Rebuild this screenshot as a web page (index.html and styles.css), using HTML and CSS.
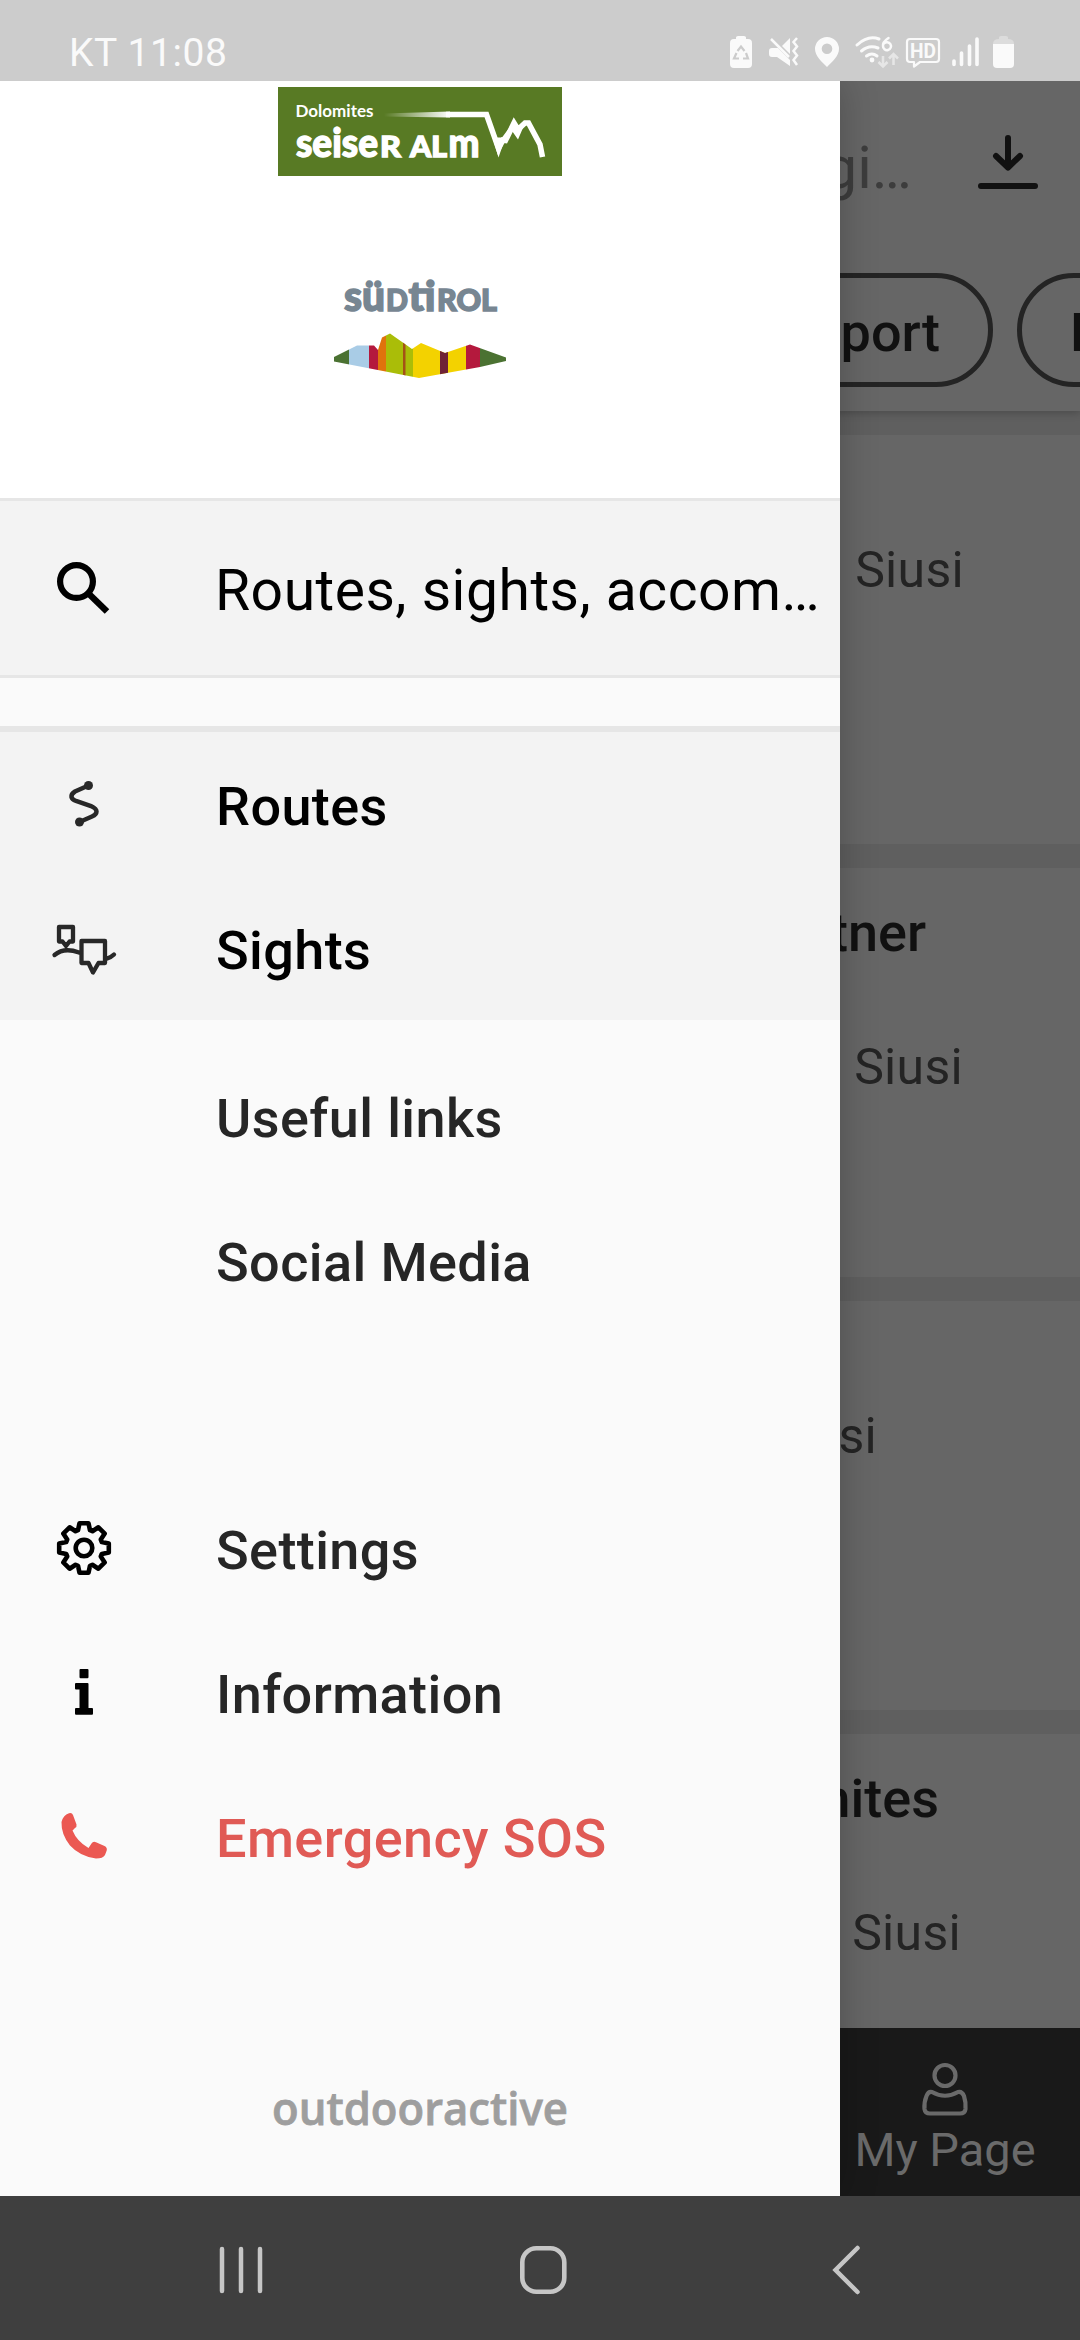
FILE: index.html
```html
<!DOCTYPE html>
<html lang="en">
<head>
<meta charset="utf-8">
<title>Seiser Alm</title>
<link rel="stylesheet" href="styles.css">
</head>
<body>
<div class="phone">
  <header class="status">
    <span class="status-time">KT 11:08</span>
    <svg class="status-icons" width="290" height="40" viewBox="728 32 290 40">
      <path fill="#fafafa" d="M736 39V37.500Q736 36 738 36H744Q746 36 746 37.500V39H748Q752 39 752 43V64Q752 68 748 68H734Q730 68 730 64V43Q730 39 734 39Z"/>
      <path fill="none" stroke="#ccc" stroke-width="2.200" d="M737.500 51L741 46.500L744.500 51M746 53L748 58.500H743M739 58.500H734L736.500 53"/>
      <path fill="#fafafa" d="M769 51Q769 48 772 48H778L790 60V66L777 57H772Q769 57 769 54ZM790 38V54L782 46Z"/>
      <path fill="none" stroke="#fafafa" stroke-width="2.500" d="M771 39L789 57M797 38L793.500 42L797 46.500L793.500 51L797 55.500L793.500 60L797 65"/>
      <path fill="#fafafa" fill-rule="evenodd" d="M827 37A12 12 0 0 1 839 49C839 56 832 62 827 67C822 62 815 56 815 49A12 12 0 0 1 827 37ZM827 43.500A5.300 5.300 0 1 0 827 54.100A5.300 5.300 0 1 0 827 43.500Z"/>
      <g fill="none" stroke="#fafafa" stroke-width="3" stroke-linecap="round">
        <path d="M857 45Q868 35 879 39M861.500 51Q869 44.500 878 48M866.500 56Q872 52 877 56"/>
        <path stroke-width="2.500" d="M888.500 38Q882.500 42 883 46A4 4 0 1 0 884 43.500"/>
      </g>
      <circle cx="872" cy="60" r="2.400" fill="#fafafa"/>
      <path fill="none" stroke="#e6e6e6" stroke-width="2.500" d="M883 56V66M878.500 62L883 66.500L887.500 62M893.500 65V55M889 58.500L893.500 54L898 58.500"/>
      <path fill="none" stroke="#fafafa" stroke-width="2.200" stroke-linejoin="round" d="M910 39H936Q939 39 939 42V59Q939 62 936 62H920L914 66.500V62H910Q907 62 907 59V42Q907 39 910 39Z"/>
      <text class="hd" x="910" y="58" textLength="26" lengthAdjust="spacingAndGlyphs">HD</text>
      <path fill="none" stroke="#fafafa" stroke-width="3.600" stroke-linecap="round" d="M954 61V64.500M961.500 53V64.500M969.500 46V64.500M977 39V64.500"/>
      <path fill="#dcdcdc" d="M999 39V37.500Q999 36 1001 36H1006Q1008 36 1008 37.500V39Q1014 39 1014 44H993Q993 39 999 39Z"/>
      <path fill="#fafafa" d="M993 44H1014V64Q1014 68 1010 68H997Q993 68 993 64Z"/>
    </svg>
  </header>

  <div class="stage">
    <main class="page">
      <div class="topbar">
        <div class="search-row">
          <span class="query">gi…</span>
          <svg width="64" height="60" viewBox="976 132 64 60" fill="none" stroke="#111" stroke-width="6" stroke-linecap="round" stroke-linejoin="round"><path d="M1008 138V167M996 156L1008 167.500L1020 156M981 186H1035"/></svg>
        </div>
        <div class="chips">
          <span class="chip chip-first">port</span>
          <span class="chip chip-next">H</span>
        </div>
      </div>
      <div class="cards">
        <article class="card"><p class="place upper p1">Siusi</p></article>
        <article class="card"><h2 class="title t2">tner</h2><p class="place p2">Siusi</p></article>
        <article class="card"><p class="place upper p3">si</p></article>
        <article class="card last"><h2 class="title t4">mites</h2><p class="place p4">Siusi</p></article>
      </div>
      <nav class="tabbar">
        <div class="tab">
          <svg width="50" height="56" viewBox="920 2060 50 56" fill="none" stroke="#6a6a6a" stroke-width="4.200" stroke-linejoin="round"><circle cx="945" cy="2074.500" r="10.500"/><path d="M932 2091Q945 2098.500 958 2091Q962 2090 964 2095Q966 2101 965.500 2108Q965 2112.500 960 2112.500H930Q925 2112.500 924.500 2108Q924 2101 926.500 2095Q928.500 2090 932 2091Z"/></svg>
          <span class="tab-label">My Page</span>
        </div>
      </nav>
    </main>

    <aside class="drawer">
      <div class="brand">
        <svg width="284" height="89" viewBox="278 87.500 284 89">
          <defs><linearGradient id="fade" x1="0" x2="1"><stop offset="0" stop-color="#fff" stop-opacity="0"/><stop offset="1" stop-color="#fff"/></linearGradient></defs>
          <rect x="278" y="87.500" width="284" height="89" fill="#587a24"/>
          <text class="logo-small" x="295.500" y="117" textLength="78" lengthAdjust="spacingAndGlyphs">Dolomites</text>
          <path fill="url(#fade)" d="M384 114L450 112V118L384 117Z"/>
          <path fill="none" stroke="#fff" stroke-width="5.500" d="M446 115H486.500L498.500 149L503 140.500L505.500 141L514 123.500L518 130L525 123.500H528.500L540 145L542.500 157.500"/>
          <path fill="#fff" d="M491 133L498.500 158L504 142H507L511 130L518 140L524 126H511L502 138L497 138Z"/>
          <text class="logo-big" x="296" y="157" textLength="82" lengthAdjust="spacingAndGlyphs">seise</text>
          <text class="logo-big sc" x="380" y="157" textLength="21" lengthAdjust="spacingAndGlyphs">R</text>
          <text class="logo-big sc" x="410" y="157" textLength="37" lengthAdjust="spacingAndGlyphs">AL</text>
          <text class="logo-big" x="448.500" y="157" textLength="31" lengthAdjust="spacingAndGlyphs">m</text>
        </svg>
        <svg class="tirol" width="176" height="106" viewBox="332 275 176 106">
          <text class="logo-tirol" x="344" y="311.500" textLength="41" lengthAdjust="spacingAndGlyphs">sü</text>
          <text class="logo-tirol sc2" x="386" y="311.500" textLength="22" lengthAdjust="spacingAndGlyphs">D</text>
          <text class="logo-tirol" x="408.500" y="311.500" textLength="27" lengthAdjust="spacingAndGlyphs">ti</text>
          <text class="logo-tirol sc2" x="437" y="311.500" textLength="60" lengthAdjust="spacingAndGlyphs">ROL</text>
          <clipPath id="ridge"><path d="M334 358L350 350L357 346.500H374L378 351L382 338.500L390 334.500L412 350L421 344L445 354L470 345.500L506 358.500V362L480 368L419 379L334 362.500Z"/></clipPath>
          <g clip-path="url(#ridge)">
            <path fill="#4b7232" d="M332 330H349V381H332ZM480 330H508V381H480Z"/>
            <path fill="#a9cce6" d="M349 330H369V381H349Z"/>
            <path fill="#b4193d" d="M369 330H378V381H369ZM466 330H480V381H466Z"/>
            <path fill="#e0730c" d="M378 330H386V381H378Z"/>
            <path fill="#aabd08" d="M386 330H413V381H386Z"/>
            <path fill="#a45216" d="M403 330H405.500V381H403Z"/>
            <path fill="#f3d200" d="M413 330H466V381H413Z"/>
            <path fill="#6f2336" d="M440 330H448V381H440Z"/>
          </g>
        </svg>
      </div>

      <div class="search">
        <span class="icon"><svg width="60" height="60" viewBox="54 557 60 60" fill="none" stroke="#000"><circle cx="76.500" cy="580.500" r="16.400" stroke-width="6.200"/><path stroke-width="6.500" d="M88.500 592.500L107 610.500"/></svg></span>
        <span class="search-text">Routes, sights, accom…</span>
      </div>

      <nav class="group featured">
        <a class="item"><span class="icon"><svg width="60" height="60" viewBox="54 774 60 60" fill="none" stroke="#282828" stroke-width="4.500"><path d="M88.500 785.500L75 791.500Q71 794 71.500 797Q72 799.500 76 801L91 806Q96.500 808.500 96.500 811.500Q96.500 814.500 92 816.500L79.500 822"/><circle cx="88.500" cy="785.500" r="4.500" fill="#282828" stroke="none"/><circle cx="79.500" cy="822" r="4.500" fill="#282828" stroke="none"/></svg></span><span>Routes</span></a>
        <a class="item"><span class="icon"><svg width="68" height="60" viewBox="50 918 68 60" fill="none" stroke="#282828" stroke-width="4.300" stroke-linejoin="round" stroke-linecap="round"><path d="M59 927H73V941.500H69.500L66 946L62.500 941.500H59ZM54.500 955Q64 947 79 952.500M81.500 941H105V963H98.500L93 972.500L88.500 963H81.500ZM106 959Q111 957.500 114 954.500"/><path d="M62 942H70L66 947Z" fill="#282828" stroke="none"/></svg></span><span>Sights</span></a>
      </nav>

      <nav class="group">
        <a class="item"><span class="icon"></span><span>Useful links</span></a>
        <a class="item"><span class="icon"></span><span>Social Media</span></a>
      </nav>

      <nav class="group tools">
        <a class="item"><span class="icon"><svg width="56" height="56" viewBox="-28 -28 56 56" fill="none" stroke="#000" stroke-width="4.600" stroke-linejoin="round"><path d="M-4.500 -24.800H4.500L6 -17.800L8.400 -16.800L14.400 -20.700L20.700 -14.400L16.800 -8.400L17.800 -6L24.800 -4.500V4.500L17.800 6L16.800 8.400L20.700 14.400L14.400 20.700L8.400 16.800L6 17.800L4.500 24.800H-4.500L-6 17.800L-8.400 16.800L-14.400 20.700L-20.700 14.400L-16.800 8.400L-17.800 6L-24.800 4.500V-4.500L-17.800 -6L-16.800 -8.400L-20.700 -14.400L-14.400 -20.700L-8.400 -16.800L-6 -17.800Z"/><circle r="8.300"/></svg></span><span>Settings</span></a>
        <a class="item"><span class="icon"><svg width="20" height="48" viewBox="74 1668 20 48"><path d="M80.500 1669H87.500Q88.500 1669 88.500 1670V1677Q88.500 1678.300 87.500 1678.300H80.500Q79.500 1678.300 79.500 1677V1670Q79.500 1669 80.500 1669ZM76 1683H87.500Q88.500 1683 88.500 1684V1708H92Q93 1708 93 1709V1713.500Q93 1714.700 92 1714.700H76Q75 1714.700 75 1713.500V1709Q75 1708 76 1708H79.500V1689.500H76Q75 1689.500 75 1688.500V1684Q75 1683 76 1683Z"/></svg></span><span>Information</span></a>
        <a class="item sos"><span class="icon"><svg width="50" height="50" viewBox="59 1811 50 50"><path fill="#eb5852" d="M69 1813.300Q72 1812.500 73 1815L76.500 1824.500Q77 1827 75 1828L72.500 1830.500Q77 1841.500 88.500 1848L91.500 1843.500Q93 1841 96 1842.200L104.500 1846Q107.500 1847.500 106.700 1850.500L105 1855Q103 1858.500 96 1858.500Q80 1856.500 70 1845.500Q61 1834 61.500 1822Q63 1815.500 69 1813.300Z"/></svg></span><span>Emergency SOS</span></a>
      </nav>

      <footer class="powered">
        <svg width="300" height="50" viewBox="270 2085 300 50"><text class="oa" x="272" y="2124.500" textLength="296" lengthAdjust="spacingAndGlyphs">outdooractive</text></svg>
      </footer>
    </aside>
  </div>

  <footer class="sysnav">
    <svg width="44" height="50" viewBox="219 2245 44 50" stroke="#c6c6c6" stroke-width="4.500" stroke-linecap="round"><path d="M222 2249V2291M241 2249V2291M260 2249V2291"/></svg>
    <svg class="home" width="50" height="50" viewBox="518 2245 50 50" fill="none" stroke="#c6c6c6" stroke-width="4.600"><rect x="522.300" y="2248.300" width="42" height="43.500" rx="14"/></svg>
    <svg width="30" height="52" viewBox="831 2244 30 52" fill="none" stroke="#c6c6c6" stroke-width="4.500" stroke-linecap="round"><path d="M857.500 2248L835.500 2270L857.500 2292"/></svg>
  </footer>
</div>
</body>
</html>
```

FILE: styles.css
```css
* { box-sizing: border-box; }
body { margin: 0; font-family: Roboto, sans-serif; }
svg { display: block; flex: none; }
p, h2 { margin: 0; }

.phone { width: 1080px; height: 2340px; display: flex; flex-direction: column; overflow: hidden; }

.status { height: 81px; background: #ccc; display: flex; justify-content: space-between; padding: 0 62px 0 69px; }
.status-time { font-size: 39px; line-height: 107px; letter-spacing: .6px; color: #fafafa; white-space: nowrap; }
.status-icons { margin-top: 32px; }
.hd { font: 700 21px Roboto, sans-serif; fill: #fafafa; }

.stage { position: relative; height: 2115px; }

.page { height: 100%; display: flex; flex-direction: column; background: #5f5f5f; overflow: hidden; }
.topbar { height: 330px; background: #666; box-shadow: 0 2px 8px rgba(0, 0, 0, .22); z-index: 1; }
.search-row { height: 192px; display: flex; justify-content: flex-end; gap: 64px; padding: 51px 40px 0 0; }
.query { font-size: 60px; line-height: 72px; color: #3d3d3d; }
.chips { display: flex; gap: 24px; padding-left: 780px; }
.chip { flex: none; height: 114px; border: 5px solid #242424; border-radius: 57px; font-size: 54px; line-height: 110px; font-weight: 500; color: #111; }
.chip-first { width: 213px; padding-right: 48px; text-align: right; }
.chip-next { width: 213px; padding-left: 48px; }

.cards { flex: 1; display: flex; flex-direction: column; gap: 24px; padding-top: 24px; overflow: hidden; }
.card { flex: none; height: 409px; background: #666; text-align: right; color: #242424; }
.title { height: 132px; font-size: 54px; line-height: 129px; font-weight: 500; color: #111; }
.place { font-size: 50px; line-height: 134px; letter-spacing: .3px; }
.upper { padding-top: 68px; }
.p1 { padding-right: 116px; }
.p2 { padding-right: 117px; }
.p3 { padding-right: 203px; }
.p4 { padding-right: 119px; }
.t2 { padding-right: 154px; }
.t4 { padding-right: 141px; }

.tabbar { height: 168px; background: #191919; display: flex; justify-content: flex-end; z-index: 1; }
.tab { width: 270px; display: flex; flex-direction: column; align-items: center; padding-top: 33px; }
.tab-label { font-size: 47px; line-height: 66px; color: #6a6a6a; }

.drawer { position: absolute; left: 0; top: 0; width: 840px; height: 2115px; background: #fafafa; box-shadow: 0 0 36px rgba(0, 0, 0, .24); z-index: 2; clip-path: inset(0 -60px 0 0); display: flex; flex-direction: column; }
.brand { height: 417px; background: #fff; display: flex; flex-direction: column; align-items: center; gap: 98px; padding-top: 6px; }
.tirol { overflow: visible; }
.logo-small { font: 700 17px Lato, sans-serif; fill: #fff; }
.logo-big { font: 900 39px Lato, sans-serif; fill: #fff; stroke: #fff; stroke-width: 1.3px; }
.logo-big.sc { font-size: 28px; }
.logo-tirol { font: 900 41px Lato, sans-serif; fill: #778692; stroke: #778692; stroke-width: 1.5px; }
.logo-tirol.sc2 { font-size: 30px; }

.search { height: 180px; background: #f3f3f3; border-top: 3px solid #e6e6e6; border-bottom: 3px solid #e6e6e6; display: flex; align-items: center; }
.icon { width: 168px; flex: none; display: flex; justify-content: center; }
.search-text { padding: 6px 0 0 47px; font-size: 57px; line-height: 68px; letter-spacing: .5px; color: #000; white-space: nowrap; }

.group { margin-top: 24px; }
.featured { margin-top: 48px; border-top: 6px solid #e6e6e6; background: #f3f3f3; }
.tools { margin-top: 144px; }
.item { height: 144px; display: flex; align-items: center; font-size: 54px; line-height: 64px; letter-spacing: .4px; font-weight: 500; color: #262626; white-space: nowrap; }
.item > span:last-child { padding: 6px 0 0 48px; }
.featured { height: 294px; }
.featured .item { color: #000; }
.item.sos { color: #e05a55; }

.powered { margin: 177px auto 0; }
.oa { font: 600 45px "Open Sans", sans-serif; fill: #9e9e9e; stroke: #9e9e9e; stroke-width: .8px; }

.sysnav { height: 144px; background: #3f3f3f; display: flex; align-items: center; padding: 4px 219px 0; }
.home { margin: 0 263px 0 255px; }
```
